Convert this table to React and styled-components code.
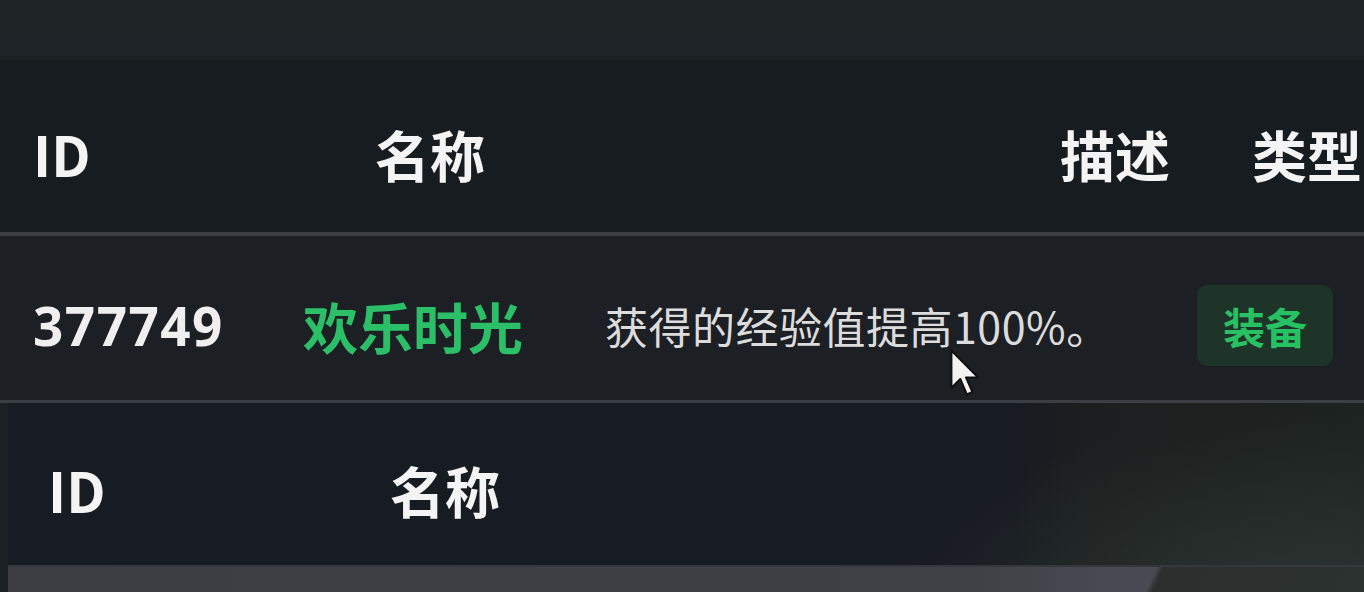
import React from 'react'
import styled, { createGlobalStyle } from 'styled-components'

const GlobalStyle = createGlobalStyle`
  html, body {
    margin: 0;
    padding: 0;
    background: #1b1f23;
  }
  body {
    font-family: "Noto Sans CJK SC", "Noto Sans", sans-serif;
    overflow: hidden;
  }
`

const Screen = styled.div`
  position: relative;
  width: 1364px;
  height: 592px;
  display: flex;
  flex-direction: column;
  overflow: hidden;
  background: #1b1f23;
`

const TopBand = styled.div`
  height: 60px;
  flex-shrink: 0;
  background: linear-gradient(180deg, #1f2427 0%, #1e2427 85%, #1b2023 100%);
`

const HeaderRow = styled.div`
  height: 176px;
  flex-shrink: 0;
  display: grid;
  grid-template-columns: ${p => p.$cols};
  align-items: center;
  padding-left: ${p => p.$pad}px;
  padding-top: ${p => p.$shift}px;
  box-sizing: border-box;
  background: #171c20;
  border-bottom: 4px solid #393e42;
`

const HeadCell = styled.div`
  color: #f4f4f4;
  font-size: 55px;
  font-weight: 700;
  line-height: 1;
  white-space: nowrap;
`

const DataRow = styled.div`
  height: 167px;
  flex-shrink: 0;
  display: grid;
  grid-template-columns: 270px 302px 592px 136px;
  align-items: center;
  padding-left: 33px;
  padding-top: 14px;
  box-sizing: border-box;
  background: #1c1f24;
  border-bottom: 3px solid #3a3f43;
`

const IdCell = styled.div`
  color: #efefef;
  font-family: "Noto Sans", "Noto Sans CJK SC", sans-serif;
  font-size: 53px;
  font-weight: 700;
  line-height: 1;
  letter-spacing: 1.5px;
`

const NameCell = styled.div`
  color: #2bc068;
  font-size: 55px;
  font-weight: 700;
  line-height: 1;
  white-space: nowrap;
`

const DescCell = styled.div`
  color: #dcdcdc;
  font-size: 43px;
  font-weight: 400;
  line-height: 1;
  white-space: nowrap;
  letter-spacing: 0.5px;
`

const Badge = styled.div`
  height: 81px;
  display: flex;
  align-items: center;
  justify-content: center;
  margin-top: 0;
  border-radius: 11px;
  background: #1e3428;
  color: #27c063;
  font-size: 42px;
  font-weight: 700;
`

const SecondTable = styled.div`
  flex: 1;
  display: flex;
  flex-direction: column;
  border-left: 8px solid #1a2023;
  background: #171b22;
`

const SecondHeader = styled.div`
  height: 162px;
  flex-shrink: 0;
  display: grid;
  grid-template-columns: 342px 1fr;
  align-items: center;
  padding-left: 40px;
  padding-top: 10px;
  box-sizing: border-box;
  background:
    radial-gradient(ellipse 420px 200px at 1300px 210px, rgba(48, 56, 52, 0.85), rgba(40, 48, 45, 0) 100%),
    linear-gradient(90deg, #171b22 0%, #171b22 74%, #1b1f1f 80%, #1d2321 100%);
`

const BottomBar = styled.div`
  flex: 1;
  background:
    linear-gradient(115deg, rgba(0,0,0,0) 0%, rgba(0,0,0,0) 84%, #2b302f 84.5%, #2c3230 100%),
    linear-gradient(90deg, #3b3f44 0%, #3e4247 72%, #484c52 82%);
  border-top: 2px solid #34383d;
`

const Cursor = styled.svg`
  position: absolute;
  left: 948px;
  top: 349px;
  width: 36px;
  height: 52px;
  pointer-events: none;
`

export default function App() {
  return (
    <>
      <GlobalStyle />
      <Screen>
        <TopBand />
        <HeaderRow $cols="342px 685px 192px 1fr" $pad={33} $shift={14}>
          <HeadCell>ID</HeadCell>
          <HeadCell>名称</HeadCell>
          <HeadCell>描述</HeadCell>
          <HeadCell>类型</HeadCell>
        </HeaderRow>
        <DataRow>
          <IdCell>377749</IdCell>
          <NameCell>欢乐时光</NameCell>
          <DescCell>获得的经验值提高100%。</DescCell>
          <Badge>装备</Badge>
        </DataRow>
        <SecondTable>
          <SecondHeader>
            <HeadCell>ID</HeadCell>
            <HeadCell>名称</HeadCell>
          </SecondHeader>
          <BottomBar />
        </SecondTable>
        <Cursor viewBox="0 0 22 32">
          <path
            d="M2 1 L2 24 L7.5 18.5 L11.5 28 L15 26.5 L11 17.5 L18.5 17.5 Z"
            fill="#f2f2f2"
            stroke="#111"
            strokeWidth="1.3"
            strokeLinejoin="round"
          />
        </Cursor>
      </Screen>
    </>
  )
}
